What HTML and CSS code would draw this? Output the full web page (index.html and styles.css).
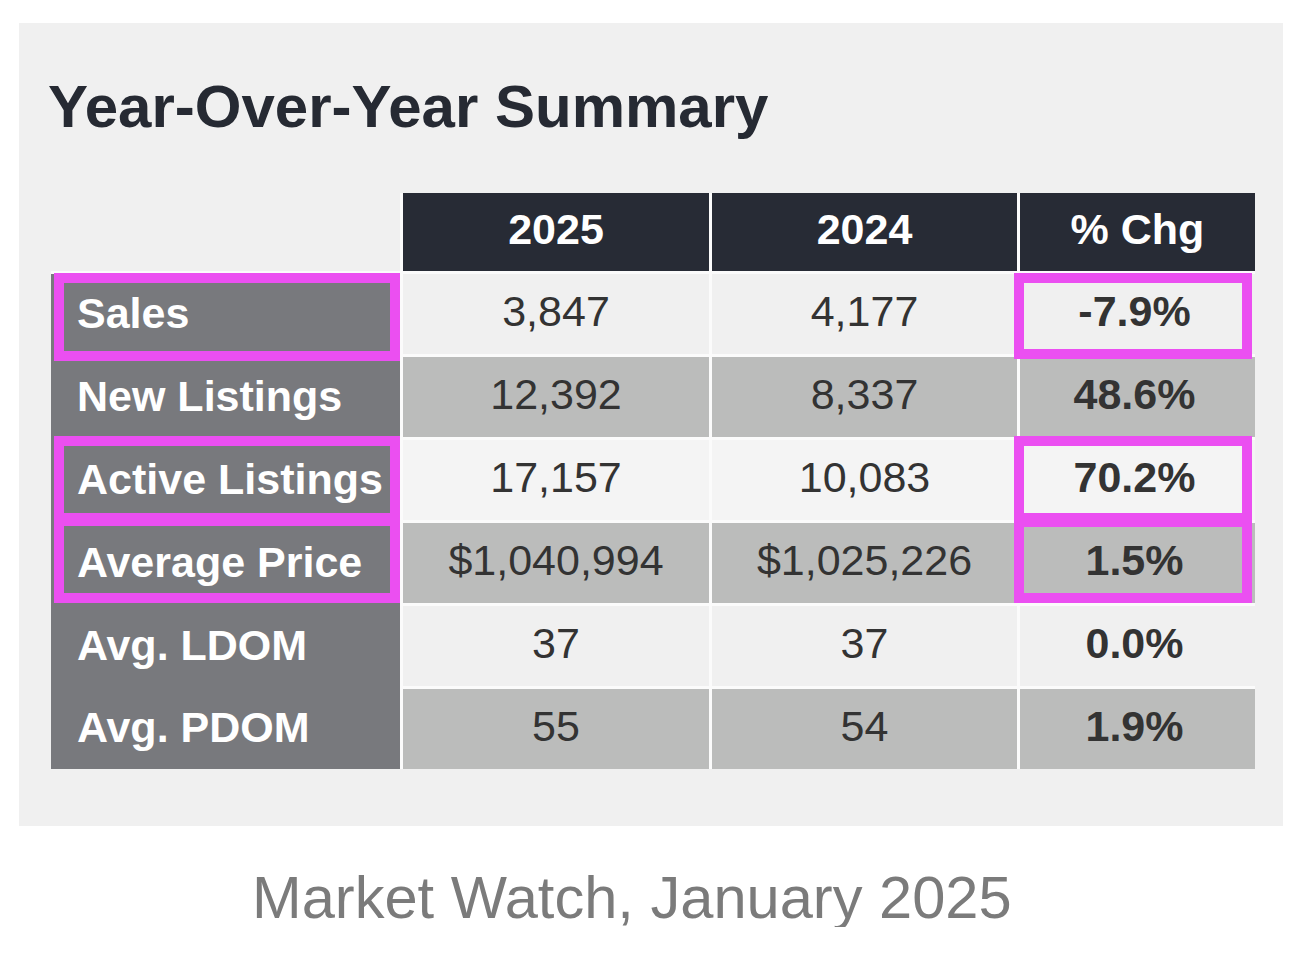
FILE: index.html
```html
<!DOCTYPE html>
<html lang="en">
<head>
<meta charset="utf-8">
<title>Year-Over-Year Summary</title>
<link rel="stylesheet" href="styles.css">
</head>
<body>
<div class="panel">
  <h1 class="title">Year-Over-Year Summary</h1>
  <div class="table">
    <div class="corner"></div>
    <div class="head">2025</div>
    <div class="head">2024</div>
    <div class="head">% Chg</div>

    <div class="label mark mark-l1">Sales</div>
    <div class="cell light">3,847</div>
    <div class="cell light">4,177</div>
    <div class="cell light pct mark mark-p1">-7.9%</div>

    <div class="label">New Listings</div>
    <div class="cell dark">12,392</div>
    <div class="cell dark">8,337</div>
    <div class="cell dark pct">48.6%</div>

    <div class="label mark mark-l3">Active Listings</div>
    <div class="cell lighter">17,157</div>
    <div class="cell lighter">10,083</div>
    <div class="cell lighter pct mark mark-p3">70.2%</div>

    <div class="label mark mark-l4">Average Price</div>
    <div class="cell dark">$1,040,994</div>
    <div class="cell dark">$1,025,226</div>
    <div class="cell dark pct mark mark-p4">1.5%</div>

    <div class="label">Avg. LDOM</div>
    <div class="cell light">37</div>
    <div class="cell light">37</div>
    <div class="cell light pct">0.0%</div>

    <div class="label label-last">Avg. PDOM</div>
    <div class="cell dark">55</div>
    <div class="cell dark">54</div>
    <div class="cell dark pct">1.9%</div>
  </div>
</div>
<p class="caption">Market Watch, January 2025</p>
</body>
</html>
```

FILE: styles.css
```css
html, body {
  margin: 0;
  padding: 0;
  background: #ffffff;
}

body {
  font-family: "Liberation Sans", Arial, sans-serif;
}

.panel {
  margin: 23px 25px 0 19px;
  background: #f0f0f0;
  padding: 54px 0 57px 29px;
}

.title {
  margin: 0;
  font-size: 60px;
  line-height: 59px;
  font-weight: 700;
  color: #262a33;
}

.table {
  margin: 57px 0 0 3px;
  display: grid;
  grid-template-columns: 349px 306px 305px 235px;
  grid-template-rows: 78px repeat(6, 80px);
  column-gap: 3px;
  row-gap: 3px;
  background: #fbfbfb;
  width: max-content;
}

.corner {
  background: #f0f0f0;
}

.head {
  background: #272b35;
  color: #ffffff;
  font-size: 43px;
  font-weight: 700;
  display: flex;
  align-items: center;
  justify-content: center;
  padding-bottom: 5px;
}

.label {
  position: relative;
  background: #78797d;
  color: #ffffff;
  font-size: 43px;
  font-weight: 700;
  display: flex;
  align-items: center;
  padding: 0 0 4px 26px;
  margin-bottom: -3px;
  white-space: nowrap;
}

.label-last {
  margin-bottom: 0;
}

.cell {
  position: relative;
  font-size: 43px;
  color: #333333;
  display: flex;
  align-items: center;
  justify-content: center;
  padding-bottom: 6px;
  white-space: nowrap;
}

.cell.light {
  background: #f0f0f0;
}

.cell.lighter {
  background: #f4f4f4;
}

.cell.dark {
  background: #bbbcbb;
}

.cell.pct {
  font-weight: 700;
  padding-right: 6px;
}

/* magenta annotation boxes drawn over cells */
.mark::after {
  content: "";
  position: absolute;
  top: var(--t);
  right: var(--r);
  bottom: var(--b);
  left: var(--l);
  border: 10px solid #eb4ff1;
  pointer-events: none;
  z-index: 2;
}

.mark-l1 { --t: -1px; --r: 0px; --b: -4px; --l: 3px; }
.mark-l3 { --t: -4px; --r: 0px; --b: 0px;  --l: 3px; }
.mark-l4 { --t: -7px; --r: 0px; --b: 3px;  --l: 3px; }

.mark-p1 { --t: -1px; --r: 3px; --b: -5px; --l: -6px; }
.mark-p3 { --t: -4px; --r: 3px; --b: -3px; --l: -6px; }
.mark-p4 { --t: -6px; --r: 3px; --b: 0px;  --l: -6px; }

.caption {
  margin: 42px 0 0 252px;
  font-size: 59.6px;
  line-height: 59px;
  color: #7b7b7b;
  white-space: nowrap;
}
```
